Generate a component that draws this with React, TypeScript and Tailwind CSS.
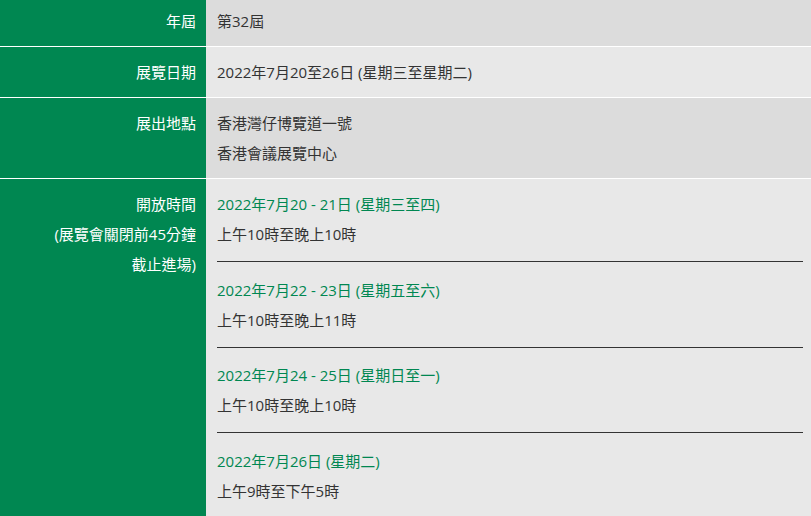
const font = {
  fontFamily: '"Open Sans", "Noto Sans CJK TC", sans-serif',
}

type Slot = {
  date: string
  hours: string
}

const slots: Slot[] = [
  { date: '2022年7月20 - 21日 (星期三至四)', hours: '上午10時至晚上10時' },
  { date: '2022年7月22 - 23日 (星期五至六)', hours: '上午10時至晚上11時' },
  { date: '2022年7月24 - 25日 (星期日至一)', hours: '上午10時至晚上10時' },
  { date: '2022年7月26日 (星期二)', hours: '上午9時至下午5時' },
]

function Row({
  label,
  tone,
  children,
}: {
  label: React.ReactNode
  tone: 'dark' | 'light'
  children: React.ReactNode
}) {
  return (
    <div className="flex border-b border-white">
      <div className="w-[206px] shrink-0 bg-[#008751] py-[10px] pr-[10px] text-right text-[15px] leading-[30px] text-white">
        {label}
      </div>
      <div
        className={
          'flex-1 py-[10px] pl-[11px] pr-2 text-[15px] leading-[30px] text-[#333] ' +
          (tone === 'dark' ? 'bg-[#dcdcdc]' : 'bg-[#e8e8e8]')
        }
      >
        {children}
      </div>
    </div>
  )
}

export default function App() {
  return (
    <div className="w-[811px] h-[516px] overflow-hidden bg-white" style={font}>
      <div className="-mt-1">
        <Row label="年屆" tone="dark">
          第32屆
        </Row>
        <Row label="展覽日期" tone="light">
          2022年7月20至26日 (星期三至星期二)
        </Row>
        <Row label={<p>展出地點</p>} tone="dark">
          <p>香港灣仔博覽道一號</p>
          <p>香港會議展覽中心</p>
        </Row>
        <Row
          label={
            <>
              <p>開放時間</p>
              <p>(展覽會關閉前45分鐘</p>
              <p>截止進場)</p>
            </>
          }
          tone="light"
        >
          {slots.map((s, i) => (
            <div key={s.date}>
              <p className="text-[#008751]">{s.date}</p>
              <p>{s.hours}</p>
              {i < slots.length - 1 && (
                <div className="mt-3 mb-[12.5px] h-px bg-[#333]" />
              )}
            </div>
          ))}
        </Row>
      </div>
    </div>
  )
}
